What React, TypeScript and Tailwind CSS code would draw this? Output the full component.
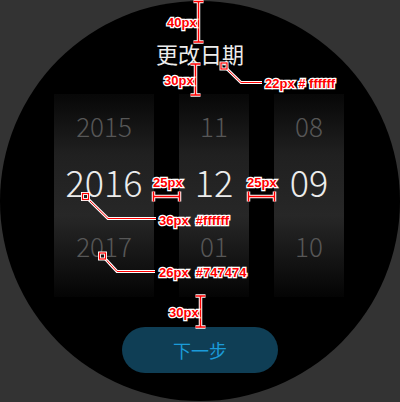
import React from 'react'

const columns = [
  { id: 'year', width: 'w-[100px]', values: ['2015', '2016', '2017'] },
  { id: 'month', width: 'w-[70px]', values: ['11', '12', '01'] },
  { id: 'day', width: 'w-[70px]', values: ['08', '09', '10'] },
]

function Picker() {
  return (
    <div className="mt-[30px] flex gap-[25px] h-[203px] -ml-[2px]">
      {columns.map(col => (
        <div
          key={col.id}
          className={`${col.width} h-full flex flex-col items-center pt-[19px] bg-[linear-gradient(to_bottom,#070707_0%,#202020_30%,#272727_60%,#040404_100%)]`}
        >
          <span className="text-[26px] leading-[26px] font-light text-[#575757]">{col.values[0]}</span>
          <span className="mt-[24px] text-[36px] leading-[36px] font-light text-[#ececec]">{col.values[1]}</span>
          <span className="mt-[34px] text-[26px] leading-[26px] font-light text-[#575757]">{col.values[2]}</span>
        </div>
      ))}
    </div>
  )
}

// red spec marks drawn over the screen
function Annotations() {
  const label = (x: number, y: number, t: string) => (
    <text
      x={x}
      y={y}
      fill="#ff0000"
      stroke="#ffffff"
      strokeWidth={2.5}
      paintOrder="stroke"
      fontFamily="'Liberation Sans', Arial, sans-serif"
      fontWeight="bold"
      fontSize={13}
      style={{ whiteSpace: 'pre' }}
    >
      {t}
    </text>
  )
  const vMeasure = (x: number, y1: number, y2: number) => (
    <g>
      <path d={`M${x} ${y1}V${y2}M${x - 5} ${y1}H${x + 5}M${x - 5} ${y2}H${x + 5}`} stroke="#fff" strokeWidth={3.5} />
      <path d={`M${x} ${y1}V${y2}M${x - 5} ${y1}H${x + 5}M${x - 5} ${y2}H${x + 5}`} stroke="#f00" strokeWidth={1.5} />
    </g>
  )
  const hMeasure = (y: number, x1: number, x2: number) => (
    <g>
      <path d={`M${x1} ${y}H${x2}M${x1} ${y - 5}V${y + 5}M${x2} ${y - 5}V${y + 5}`} stroke="#fff" strokeWidth={3.5} />
      <path d={`M${x1} ${y}H${x2}M${x1} ${y - 5}V${y + 5}M${x2} ${y - 5}V${y + 5}`} stroke="#f00" strokeWidth={1.5} />
    </g>
  )
  const callout = (cx: number, cy: number, bx: number, by: number, ex: number) => (
    <g fill="none">
      <path d={`M${cx + 2} ${cy + 2}L${bx} ${by}H${ex}`} stroke="#fff" strokeWidth={3} />
      <path d={`M${cx + 2} ${cy + 2}L${bx} ${by}H${ex}`} stroke="#f00" strokeWidth={1} />
      <rect x={cx - 3} y={cy - 3} width={6} height={6} stroke="#fff" strokeWidth={3} />
      <rect x={cx - 3} y={cy - 3} width={6} height={6} stroke="#f00" strokeWidth={1.2} />
    </g>
  )
  return (
    <svg className="absolute inset-0 pointer-events-none" width={400} height={402} viewBox="0 0 400 402">
      {vMeasure(198.5, 1.5, 42)}
      {label(167, 27, '40px')}
      {vMeasure(195.5, 64, 95)}
      {label(164, 85, '30px')}
      {callout(224, 66, 241, 82.5, 262)}
      {label(265, 88, '22px # ffffff')}
      {hMeasure(196.5, 153.5, 179.5)}
      {label(153, 187, '25px')}
      {hMeasure(196.5, 248.5, 274.5)}
      {label(247, 187, '25px')}
      {callout(85.5, 196.5, 108, 218.5, 156)}
      {label(159, 225, '36px  #ffffff')}
      {callout(102.5, 256, 117, 271.5, 155)}
      {label(159, 277, '26px  #747474')}
      {vMeasure(200.5, 296, 327)}
      {label(169, 317, '30px')}
    </svg>
  )
}

export default function App() {
  return (
    <div className="relative w-[400px] h-[402px] overflow-hidden bg-[#333333] font-['Noto_Sans_CJK_SC','Noto_Sans',sans-serif]">
      <div className="mt-px w-[400px] h-[400px] rounded-full bg-black flex flex-col items-center">
        <h1 className="mt-[41px] text-[22px] leading-[22px] font-normal text-[#ececec]">更改日期</h1>
        <Picker />
        <button className="mt-[30px] w-[156px] h-[46px] rounded-full bg-[#0f3e55] text-[18px] leading-[18px] text-[#1b9bd9]">
          下一步
        </button>
      </div>
      <Annotations />
    </div>
  )
}
